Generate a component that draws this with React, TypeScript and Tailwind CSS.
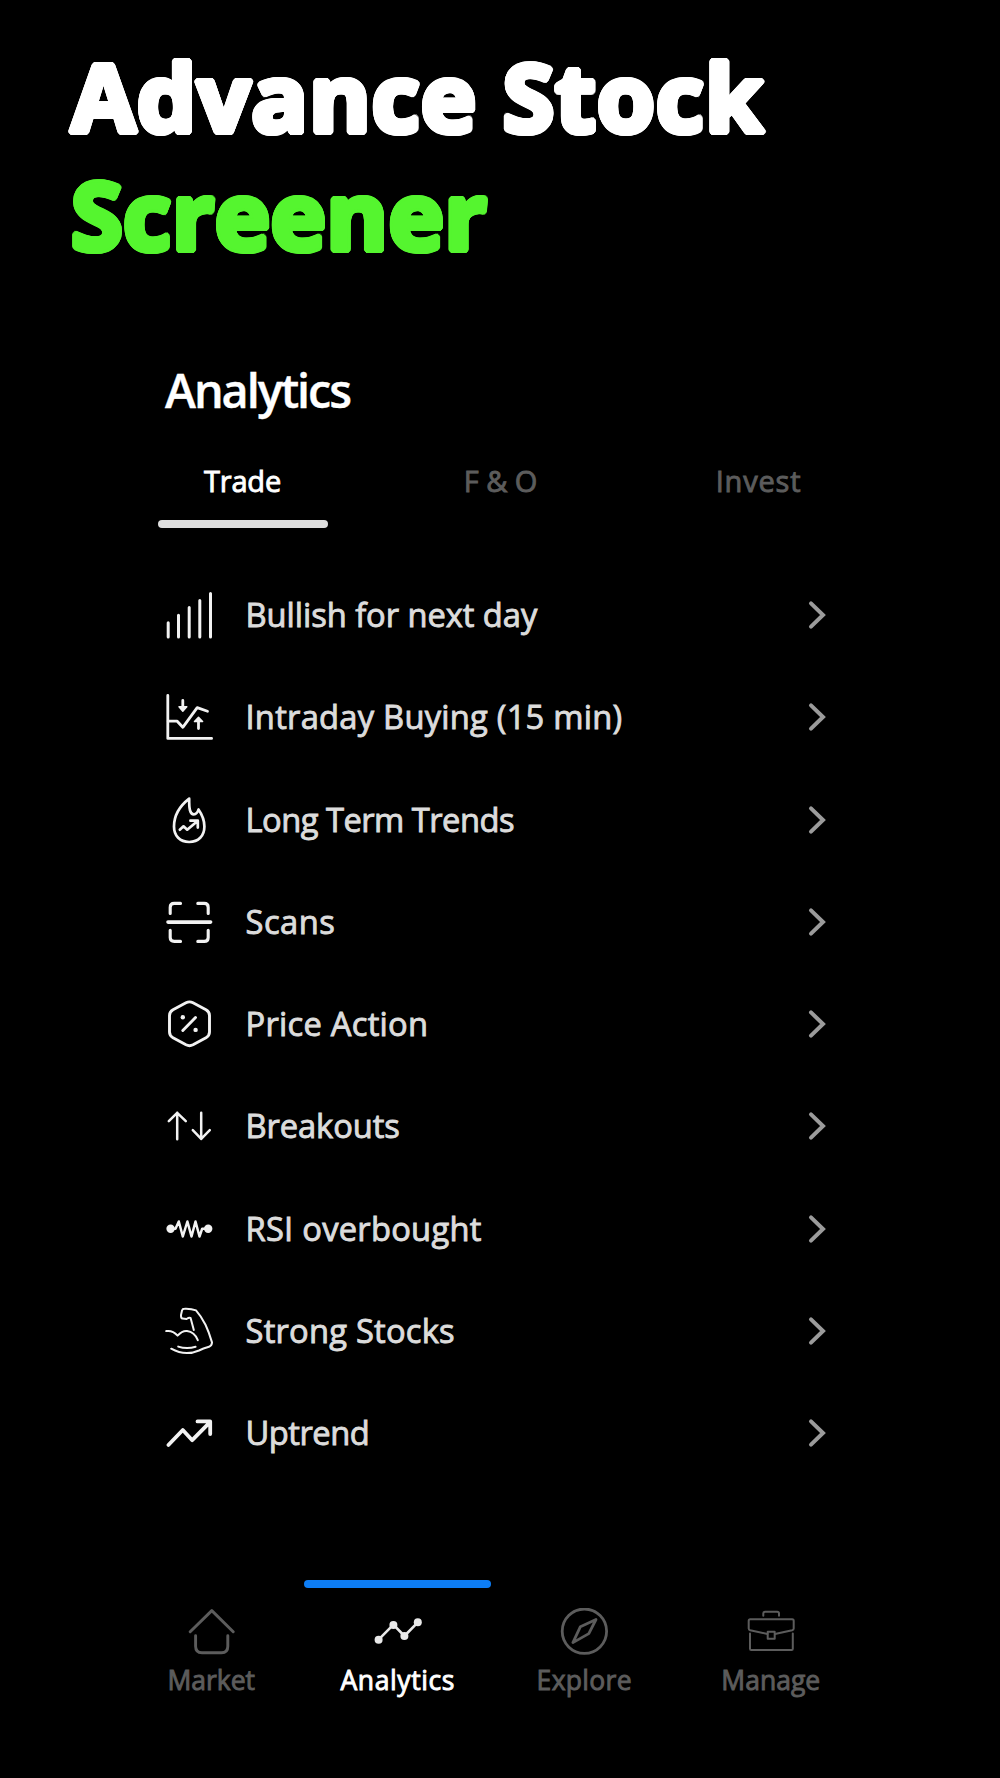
import { useState } from 'react';
import type { ReactNode } from 'react';

const tabs = [
  { label: 'Trade', spacing: 'tracking-[-0.2px]' },
  { label: 'F & O', spacing: 'tracking-[0px]' },
  { label: 'Invest', spacing: 'tracking-[0.8px]' },
];

const screeners: { label: string; spacing: string; width: number; icon: ReactNode }[] = [
  {
    label: 'Bullish for next day',
    spacing: 'tracking-[-0.05px]',
    width: 3,
    icon: <path d="M3.2 31.8V46M13.5 24.2V46M24.2 16.5V46M34.8 9.4V46M45.5 2.4V46" />,
  },
  {
    label: 'Intraday Buying (15 min)',
    spacing: 'tracking-[0.24px]',
    width: 2.8,
    icon: (
      <>
        <path d="M2.8 2.4V45.4H46.6" />
        <path d="M3.2 28.2H12.2L17.8 34.3L32.2 14.6L42.5 18.2M17.8 7.5V14M33.5 35.5V28" />
        <path d="M14 13.8H21.8L17.8 18.2ZM29.5 28.6H37.6L33.5 24.3Z" fill="currentColor" strokeWidth="1.5" />
      </>
    ),
  },
  {
    label: 'Long Term Trends',
    spacing: 'tracking-[-0.52px]',
    width: 2.7,
    icon: (
      <>
        <path d="M24.2 2.6C16 9 9 19 9 30.5C9 40 15 46 24.2 46S39.4 40 39.4 30.5C39.4 24 37 18.5 33.5 13.5C32.5 17 31 18.3 28.8 18.3C25 18.3 24 13 24.2 2.6Z" />
        <path d="M14.8 33.7L18.5 30.3L22.2 33.7L32.3 25.2M25.4 24.7H32.8V31.6" />
      </>
    ),
  },
  {
    label: 'Scans',
    spacing: 'tracking-[0.5px]',
    width: 3.1,
    icon: (
      <>
        <path d="M5.2 15.5V9.4Q5.2 5.4 9.2 5.4H15.5M32.8 5.4H39.2Q43.2 5.4 43.2 9.4V15.5M43.2 32.3V39.4Q43.2 43.4 39.2 43.4H32.8M15.5 43.4H9.2Q5.2 43.4 5.2 39.4V32.3" />
        <path d="M3 24.1H45.6" strokeWidth="3.6" />
      </>
    ),
  },
  {
    label: 'Price Action',
    spacing: 'tracking-[0.26px]',
    width: 2.9,
    icon: (
      <>
        <path d="M21 2.8Q24.5 1 28 2.8L41 9.8Q44.5 11.8 44.5 15.5V32Q44.5 35.6 41 37.7L28 44.8Q24.5 46.6 21 44.8L8 37.7Q4.5 35.6 4.5 32V15.5Q4.5 11.8 8 9.8Z" />
        <path d="M30.5 17.5L17.8 30.5" />
        <circle cx="17.8" cy="17.2" r="2.2" fill="currentColor" stroke="none" />
        <circle cx="30.6" cy="29.9" r="2.2" fill="currentColor" stroke="none" />
      </>
    ),
  },
  {
    label: 'Breakouts',
    spacing: 'tracking-[-0.1px]',
    width: 2.5,
    icon: <path d="M12.2 37.2V10.8M3.8 19.2L12.2 10.8L20.8 19.2M36.2 10.8V37M27.8 28.2L36.2 36.8L44.8 28.2" />,
  },
  {
    label: 'RSI overbought',
    spacing: 'tracking-[0.25px]',
    width: 2.5,
    icon: (
      <>
        <path d="M5.5 23.7H10.5L13.8 16.5L17.8 31.5L22.4 16.5L26.5 31.5L30.5 16.5L34.5 31.5L37.2 23.7H43.2" />
        <circle cx="5.6" cy="23.7" r="4.2" fill="currentColor" stroke="none" />
        <circle cx="43.2" cy="23.7" r="4.2" fill="currentColor" stroke="none" />
      </>
    ),
  },
  {
    label: 'Strong Stocks',
    spacing: 'tracking-[0.22px]',
    width: 2,
    icon: (
      <>
        <path d="M28.8 23L25.6 11Q24.5 10 21.5 12L17.5 11.6Q15.8 11.2 16 8L17 3.5Q17.5 1.8 19.5 1.8Q26 1.5 31 3.4Q36 9 40.5 17.7Q44 25 47 35.4Q47.1 38.5 44 39.8Q38 41.5 34 43.5Q20 49.5 6.2 41.7" />
        <path d="M13.2 39.6Q22 42.5 30.6 39.7M1.2 24.1Q7.5 23 12.6 28.6Q17.5 23.5 22 24.1Q29.5 25 32.8 33.2" />
      </>
    ),
  },
  {
    label: 'Uptrend',
    spacing: 'tracking-[-0.5px]',
    width: 3.8,
    icon: <path d="M3.4 36L17.8 21L27.2 31.2L45 13.2M32.5 12.4H45.2V25" />,
  },
];

const navItems: { label: string; spacing: string; width: number; icon: ReactNode }[] = [
  {
    label: 'Market',
    spacing: 'tracking-[0px]',
    width: 2.9,
    icon: <path d="M3.2 23.8L24.8 2.6L46.2 23.8M8.6 27.8V38.2Q8.6 44.7 15 44.7H34.5Q40.8 44.7 40.8 38.2V27.8" />,
  },
  {
    label: 'Analytics',
    spacing: 'tracking-[0.6px]',
    width: 2.6,
    icon: (
      <g className="text-[#e8e8e8]">
        <path d="M4.6 31.7L19.4 16.7L30.4 28L43.8 14.3" stroke="currentColor" />
        <g fill="currentColor" stroke="none">
          <circle cx="4.6" cy="31.7" r="4" />
          <circle cx="19.4" cy="16.9" r="4" />
          <circle cx="30.4" cy="28" r="4" />
          <circle cx="43.8" cy="14.3" r="4" />
        </g>
      </g>
    ),
  },
  {
    label: 'Explore',
    spacing: 'tracking-[0.3px]',
    width: 2.8,
    icon: (
      <>
        <circle cx="24.4" cy="23.2" r="22.2" />
        <path d="M36 11.5L20.4 18.7L12.9 34.6L28.8 25.6Z" />
      </>
    ),
  },
  {
    label: 'Manage',
    spacing: 'tracking-[0px]',
    width: 2,
    icon: (
      <>
        <path d="M16.3 7.7V5.5Q16.3 3.7 18.2 3.7H30.2Q32 3.7 32 5.5V7.7" />
        <path d="M20.5 26L3.2 22.2Q1.7 21.8 1.7 20.5V12.8Q1.7 11.3 3.2 11.3H45.2Q46.7 11.3 46.7 12.8V20.5Q46.7 21.8 45.2 22.2L27.9 26" />
        <path d="M3 25.5V40.8Q3 42 4.2 42H44.6Q45.8 42 45.8 40.8V25.5" />
        <rect x="20.7" y="23.8" width="7" height="7" />
      </>
    ),
  },
];

const Icon = ({ width, className, children }: { width: number; className?: string; children: ReactNode }) => (
  <svg
    viewBox="0 0 48 48"
    className={`h-12 w-12 shrink-0 ${className ?? ''}`}
    fill="none"
    stroke="currentColor"
    strokeWidth={width}
    strokeLinecap="round"
    strokeLinejoin="round"
  >
    {children}
  </svg>
);

const App = () => {
  const [activeTab, setActiveTab] = useState('Trade');
  const [activeNav, setActiveNav] = useState('Analytics');

  return (
    <div className="h-[1778px] w-[1000px] overflow-hidden bg-black font-['Open_Sans',sans-serif] font-medium [-webkit-text-stroke:0.9px_currentColor]">
      {/* Shadows on every side thicken the headline and round its corners */}
      <h1 className="pt-[37px] pl-[71px] text-[94px] leading-[118px] font-bold whitespace-nowrap text-white [-webkit-text-stroke:0px] [text-shadow:3px_0_0,-3px_0_0,0_3px_0,0_-3px_0,2.1px_2.1px_0,-2.1px_2.1px_0,2.1px_-2.1px_0,-2.1px_-2.1px_0,2.8px_1.1px_0,-2.8px_1.1px_0,2.8px_-1.1px_0,-2.8px_-1.1px_0,1.1px_2.8px_0,-1.1px_2.8px_0,1.1px_-2.8px_0,-1.1px_-2.8px_0]">
        <span className="block tracking-[0.85px]">Advance Stock</span>
        <span className="block tracking-[0.3px] text-[#55f52f]">Screener</span>
      </h1>

      <h2 className="mt-[87px] pl-[165px] text-[46.8px] leading-[60px] font-semibold text-white [-webkit-text-stroke:0.4px_currentColor]">
        <span className="tracking-[-2.05px]">Analytics</span>
      </h2>

      {/* Tabs */}
      <div className="mt-[41px] ml-[113.5px] grid w-[774px] grid-cols-3">
        {tabs.map((tab) => (
          <button key={tab.label} onClick={() => setActiveTab(tab.label)} className="flex flex-col items-center">
            <span className={`text-[29px] leading-10 ${tab.spacing} ${activeTab === tab.label ? 'text-white' : 'text-[#5c5c5c]'}`}>
              {tab.label}
            </span>
            <span className={`mt-[19px] h-2 w-[170px] rounded-full ${activeTab === tab.label ? 'bg-[#dedede]' : ''}`} />
          </button>
        ))}
      </div>

      {/* Screener list */}
      <ul className="mt-9 pr-[172px] pl-[164.5px]">
        {screeners.map((item) => (
          <li key={item.label} className="flex h-[102.25px] items-center text-[#dcdcdc]">
            <Icon width={item.width} className="text-[#f2f2f2]">{item.icon}</Icon>
            <span className={`ml-[33px] text-[32.7px] leading-10 whitespace-nowrap ${item.spacing}`}>{item.label}</span>
            <svg viewBox="0 0 20 30" className="ml-auto h-[30px] w-5 text-[#9b9b9b]" fill="none" stroke="currentColor" strokeWidth="4" strokeLinecap="round" strokeLinejoin="miter">
              <path d="M3 3.4L15 15L3 26.6" />
            </svg>
          </li>
        ))}
      </ul>

      {/* Bottom navigation */}
      <nav className="mt-[96px] ml-[118px] grid w-[746px] grid-cols-4">
        {navItems.map((item) => (
          <button
            key={item.label}
            onClick={() => setActiveNav(item.label)}
            className={`flex flex-col items-center ${activeNav === item.label ? 'text-white' : 'text-[#5c5c5c]'}`}
          >
            <span className={`h-2 w-[187px] rounded-full ${activeNav === item.label ? 'bg-[#0d7df5]' : ''}`} />
            <Icon width={item.width} className="mt-5">{item.icon}</Icon>
            <span className={`mt-1 text-[26.5px] leading-10 ${item.spacing}`}>{item.label}</span>
          </button>
        ))}
      </nav>
    </div>
  );
};

export default App;
